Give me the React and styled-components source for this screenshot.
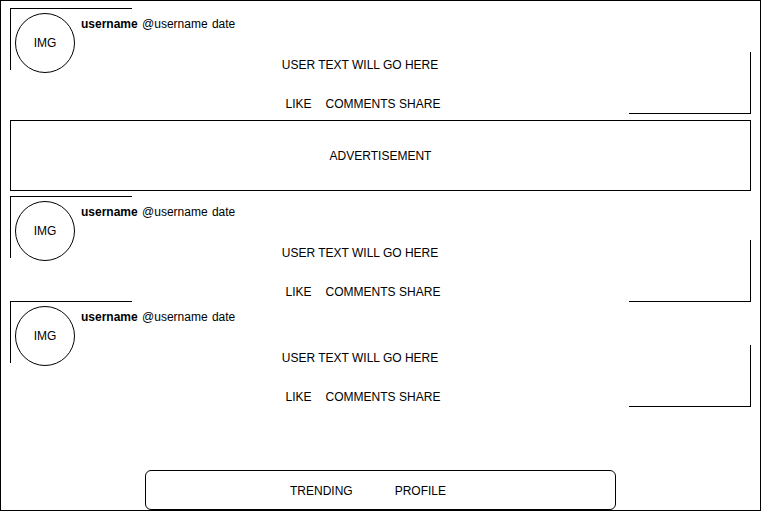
import React from "react";
import styled, { createGlobalStyle } from "styled-components";

const GlobalStyle = createGlobalStyle`
  html, body { margin: 0; padding: 0; background: #fff; }
  body { font-family: "Liberation Sans", Arial, sans-serif; font-size: 12px; color: #000; }
  * { box-sizing: border-box; }
`;

const Frame = styled.div`
  width: 761px;
  height: 511px;
  border: 1px solid #000;
  padding: 7px 9px 0 9px;
  display: flex;
  flex-direction: column;
  background: #fff;
`;

const Post = styled.article`
  position: relative;
  height: 105px;
  flex: 0 0 105px;
  display: flex;
  align-items: flex-start;
  padding: 5px 112px 0 5px;

  &::before {
    content: "";
    position: absolute;
    top: 0;
    left: 0;
    width: 121px;
    height: 61px;
    border-top: 1px solid #000;
    border-left: 1px solid #000;
    pointer-events: none;
  }
  &::after {
    content: "";
    position: absolute;
    bottom: -1px;
    right: 0;
    width: 121px;
    height: 61px;
    border-bottom: 1px solid #000;
    border-right: 1px solid #000;
    pointer-events: none;
  }
`;

const Avatar = styled.div`
  width: 60px;
  height: 60px;
  flex: 0 0 60px;
  border: 1px solid #000;
  border-radius: 50%;
  display: flex;
  align-items: center;
  justify-content: center;
  font-size: 12px;
`;

const Body = styled.div`
  flex: 1;
  margin-left: 6px;
  display: flex;
  flex-direction: column;
`;

const NameLine = styled.div`
  line-height: 14px;
  margin-top: 4px;
  white-space: nowrap;
  word-spacing: 1px;
`;

const Name = styled.strong`
  font-weight: bold;
`;

const UserText = styled.p`
  margin: 27px 0 0 0;
  line-height: 14px;
  text-align: center;
`;

const Actions = styled.div`
  margin-top: 25px;
  line-height: 14px;
  display: flex;
  justify-content: center;
  padding-left: 6px;
`;

const Action = styled.span`
  margin-right: ${(p) => p.$space}px;
`;

const Ad = styled.section`
  height: 71px;
  flex: 0 0 71px;
  margin: 7px 0 5px 0;
  border: 1px solid #000;
  display: flex;
  align-items: center;
  justify-content: center;
`;

const Nav = styled.nav`
  margin-top: auto;
  align-self: center;
  width: 471px;
  height: 40px;
  border: 1px solid #000;
  border-radius: 6px;
  display: flex;
  align-items: center;
  padding: 2px 0 0 144px;
  gap: 42px;
`;

const NavItem = styled.span``;

function FeedPost() {
  return (
    <Post>
      <Avatar>IMG</Avatar>
      <Body>
        <NameLine>
          <Name>username</Name> @username date
        </NameLine>
        <UserText>USER TEXT WILL GO HERE</UserText>
        <Actions>
          <Action $space={14}>LIKE</Action>
          <Action $space={3.5}>COMMENTS</Action>
          <Action $space={0}>SHARE</Action>
        </Actions>
      </Body>
    </Post>
  );
}

export default function App() {
  return (
    <>
      <GlobalStyle />
      <Frame>
        <FeedPost />
        <Ad>ADVERTISEMENT</Ad>
        <FeedPost />
        <FeedPost />
        <Nav>
          <NavItem>TRENDING</NavItem>
          <NavItem>PROFILE</NavItem>
        </Nav>
      </Frame>
    </>
  );
}
